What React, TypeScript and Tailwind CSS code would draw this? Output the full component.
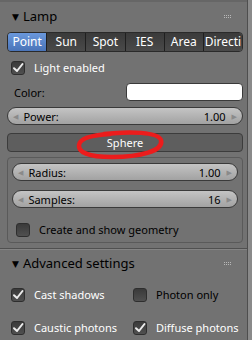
import React from "react";

const tabs = ["Point", "Sun", "Spot", "IES", "Area", "Directi"];

function Grip() {
  return (
    <div className="grid grid-cols-4 gap-x-[1px] gap-y-[1px]">
      {Array(8)
        .fill(0)
        .map((_, i) => (
          <div key={i} className="h-[1px] w-[1px] bg-[#b8b8b8]" />
        ))}
    </div>
  );
}

function Check({ checked, label }: { checked: boolean; label: string }) {
  return (
    <div className="flex items-center gap-[9px] whitespace-nowrap">
      <div className="flex h-[14px] w-[14px] shrink-0 items-center justify-center rounded-[3px] border border-[#2e2e2e] bg-gradient-to-b from-[#3a3a3a] to-[#505050]">
        {checked && (
          <svg width="12" height="12" viewBox="0 0 12 12">
            <path d="M2 6.2 L5 9 L10.5 2" fill="none" stroke="#ececec" strokeWidth="2" strokeLinecap="round" strokeLinejoin="round" />
          </svg>
        )}
      </div>
      <span className={checked ? "text-white" : "text-black"}>{label}</span>
    </div>
  );
}

function Slider({ label, value }: { label: string; value: string }) {
  return (
    <div className="flex h-[18px] items-center justify-between rounded-full border border-[#3a3a3a] bg-gradient-to-b from-[#c4c4c4] to-[#a2a2a2] px-[5px] text-black">
      <div className="flex items-center gap-[5px]">
        <span className="text-[7px] text-[#8a8a8a]">◀</span>
        <span>{label}</span>
      </div>
      <div className="flex items-center gap-[6px]">
        <span>{value}</span>
        <span className="text-[7px] text-[#8a8a8a]">▶</span>
      </div>
    </div>
  );
}

function Header({ title }: { title: string }) {
  return (
    <div className="flex h-[24px] items-center justify-between pl-[12px] pr-[16px] text-black">
      <div className="flex items-center gap-[4px]">
        <span className="text-[9px]">▼</span>
        <span className="text-[13px]">{title}</span>
      </div>
      <Grip />
    </div>
  );
}

export default function App() {
  return (
    <div
      className="relative h-[340px] w-[252px] overflow-hidden bg-[#727272] text-[11px] leading-none"
      style={{ fontFamily: '"Noto Sans", "DejaVu Sans", sans-serif' }}
    >
      <div className="flex h-full border-r-[4px] border-[#8a8a8a]">
        <div className="flex-1 border-r border-[#4e4e4e]">
          <div className="border-t-[2px] border-[#666666] pt-[2px]">
            <Header title="Lamp" />
            <div className="flex flex-col px-[7px] pr-[4px] pt-[4px]">
              <div className="flex h-[20px] overflow-hidden rounded-[4px] border border-[#2a2a2a] text-[12px]">
                {tabs.map((t, i) => (
                  <div
                    key={t}
                    className={
                      i === 0
                        ? "flex flex-1 items-center justify-center bg-gradient-to-b from-[#6a98dc] to-[#4a74b8] text-white"
                        : "flex flex-1 items-center justify-center border-l border-[#1f1f1f] bg-gradient-to-b from-[#3a3a3a] to-[#4a4a4a] text-white"
                    }
                  >
                    {t}
                  </div>
                ))}
              </div>
              <div className="ml-[4px] mt-[8px] flex h-[15px] items-center">
                <Check checked label="Light enabled" />
              </div>
              <div className="mt-[8px] flex h-[18px] items-center">
                <span className="w-[119px] pl-[7px] text-black">Color:</span>
                <div className="h-[18px] flex-1 rounded-[4px] border border-[#3a3a3a] bg-white" />
              </div>
              <div className="mt-[6px]">
                <Slider label="Power:" value="1.00" />
              </div>
              <div className="mt-[8px] flex h-[19px] items-center justify-center rounded-[4px] border border-[#3c3c3c] bg-[#5e5e5e] text-white">
                Sphere
              </div>
              <div className="mt-[5px] flex h-[86px] flex-col rounded-[4px] border border-[#5a5a5a] px-[4px] pt-[5px]">
                <Slider label="Radius:" value="1.00" />
                <div className="mt-[9px]">
                  <Slider label="Samples:" value="16" />
                </div>
                <div className="ml-[4px] mt-[14px] flex h-[15px] items-center">
                  <Check checked={false} label="Create and show geometry" />
                </div>
              </div>
            </div>
          </div>
          <div className="mt-[5px] border-t border-[#505050]">
            <div className="border-t border-[#848484] pt-[1px]">
              <Header title="Advanced settings" />
              <div className="mt-[12px] grid grid-cols-[122px_1fr] gap-y-[18px] pl-[11px]">
                <div className="flex h-[15px] items-center">
                  <Check checked label="Cast shadows" />
                </div>
                <div className="flex h-[15px] items-center">
                  <Check checked={false} label="Photon only" />
                </div>
                <div className="flex h-[15px] items-center">
                  <Check checked label="Caustic photons" />
                </div>
                <div className="flex h-[15px] items-center">
                  <Check checked label="Diffuse photons" />
                </div>
              </div>
            </div>
          </div>
        </div>
      </div>
      <svg className="pointer-events-none absolute left-0 top-0" width="252" height="340" viewBox="0 0 252 340">
        <path
          d="M104 134 C 130 131, 158 132, 161 140 C 164 151, 140 157, 112 157 C 88 157, 78 152, 79 145 C 80 138, 92 135, 110 134"
          fill="none"
          stroke="#ec1c1c"
          strokeWidth="4.5"
          strokeLinecap="round"
        />
      </svg>
    </div>
  );
}
